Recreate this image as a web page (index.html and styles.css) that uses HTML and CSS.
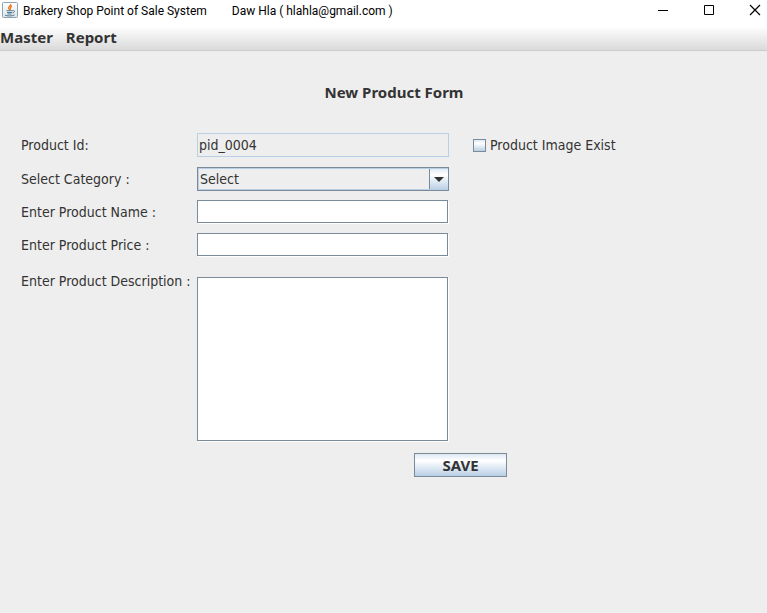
FILE: index.html
```html
<!DOCTYPE html>
<html lang="en">
<head>
<meta charset="utf-8">
<title>Brakery Shop Point of Sale System</title>
<link rel="stylesheet" href="styles.css">
</head>
<body>
<header class="titlebar">
  <svg class="app-icon" width="16" height="16" viewBox="0 0 16 16" aria-hidden="true">
    <defs><linearGradient id="tile" x1="0" y1="0" x2="0" y2="1"><stop offset="0" stop-color="#fff"/><stop offset="1" stop-color="#dbe5ec"/></linearGradient></defs>
    <rect x=".5" y=".5" width="15" height="15" rx="1" fill="url(#tile)" stroke="#8ba3b3"/>
    <path d="M8.700 2C9.300 4 5.500 4.500 6.700 6.500L7.700 8M10 4C7 5.300 9 6.200 8 7.800" fill="none" stroke="#ee7d25" stroke-width="1.400"/>
    <path d="M4.500 8.700H10.500M5 10.500H10M5.500 12H9.500M10.500 8.700C13.500 8 12.700 10.700 10.500 11M3 13.200C5 14.200 10 14.200 12.500 13" fill="none" stroke="#52778f"/>
  </svg>
  <span class="app-name">Brakery Shop Point of Sale System</span>
  <span class="app-user">Daw Hla ( hlahla@gmail.com )</span>
  <div class="window-buttons">
    <button type="button" aria-label="Minimize"><svg width="12" height="12" viewBox="0 0 12 12"><path d="M1 6.500H11" stroke="#000"/></svg></button>
    <button type="button" aria-label="Maximize"><svg width="12" height="12" viewBox="0 0 12 12"><path d="M1.500 1.500H10.500V10.500H1.500Z" fill="none" stroke="#000"/></svg></button>
    <button type="button" aria-label="Close"><svg width="12" height="12" viewBox="0 0 12 12"><path d="M1 1L11 11M11 1L1 11" stroke="#000" stroke-width="1.200"/></svg></button>
  </div>
</header>
<nav class="menubar">
  <button type="button">Master</button>
  <button type="button">Report</button>
</nav>
<main class="page">
  <h1>New Product Form</h1>
  <form class="form">
    <label for="pid">Product Id:</label>
    <input class="field readonly" id="pid" type="text" value="pid_0004" readonly>
    <label class="check"><input type="checkbox">Product Image Exist</label>

    <label for="category">Select Category :</label>
    <div class="combo">
      <select id="category"><option>Select</option></select>
      <svg class="arrow" width="10" height="5" viewBox="0 0 10 5" aria-hidden="true"><path d="M0 0H10L5 5Z" fill="#333"/></svg>
    </div>

    <label for="name">Enter Product Name :</label>
    <input class="field" id="name" type="text">

    <label for="price">Enter Product Price :</label>
    <input class="field" id="price" type="text">

    <label class="top" for="description">Enter Product Description :</label>
    <textarea class="field area" id="description"></textarea>

    <div class="actions"><button class="save" type="submit">SAVE</button></div>
  </form>
</main>
</body>
</html>
```
FILE: styles.css
```css
* { box-sizing: border-box; }

body {
  margin: 0;
  min-height: 100vh;
  background: #eee;
  color: #333;
  font: 14px/20px "DejaVu Sans Condensed", "DejaVu Sans", sans-serif;
}

button, input, select, textarea { font: inherit; color: inherit; }

.titlebar {
  display: flex;
  align-items: center;
  height: 22px;
  padding: 0 6px 2px 2px;
  background: #fff;
  color: #000;
  font: 12px/20px Roboto, sans-serif;
}

.app-name { margin-left: 5px; }
.app-user { margin-left: 25px; }

.app-name, .app-user { padding-top: 2px; }

.window-buttons {
  display: flex;
  gap: 34px;
  margin-left: auto;
}

.window-buttons button {
  display: flex;
  padding: 0;
  border: 0;
  background: none;
}

.menubar {
  display: flex;
  gap: 13px;
  height: 29px;
  padding-top: 4px;
  border-bottom: 1px solid #ccc;
  background: linear-gradient(#fff 15%, #dadada);
}

.menubar button {
  height: 22px;
  padding: 0;
  border: 0;
  background: none;
}

.menubar button, h1, .save {
  font: bold 15px/20px "Noto Sans", sans-serif;
}

.page { padding: 31px 0 16px 21px; }

h1 {
  margin: 0 0 31px;
  text-align: center;
}

.form {
  display: grid;
  grid-template-columns: 176px 252px 1fr;
  row-gap: 9px;
  align-items: center;
}

.form > label { grid-column: 1; white-space: nowrap; }

.form > .check {
  grid-column: 3;
  display: flex;
  align-items: center;
  gap: 4px;
  margin-left: 24px;
}

.check input {
  appearance: none;
  width: 13px;
  height: 13px;
  margin: 0;
  border: 1px solid #7a8a99;
  background: linear-gradient(#dde8f3, #fff 30%, #b8cfe5);
}

.field {
  width: 251px;
  height: 23px;
  margin: 0 0 1px;
  padding: 0 2px;
  border: 1px solid #7a8a99;
  border-radius: 0;
  background: #fff;
  box-shadow: 1px 1px 0 #fff;
  outline: 0;
}

.readonly {
  width: 100%;
  height: 24px;
  margin-bottom: 0;
  padding: 0 1px;
  border-color: #b8cfe5;
  background: #eee;
  box-shadow: none;
}

.combo { position: relative; height: 24px; margin-top: 1px; }

.combo select {
  appearance: none;
  display: block;
  width: 100%;
  height: 24px;
  padding: 0 24px 0 2px;
  border: 1px solid #7a8a99;
  border-radius: 0;
  background:
    linear-gradient(#7a8a99, #7a8a99) right 18px top / 1px 100% no-repeat,
    linear-gradient(#dde8f3, #fff 30%, #b8cfe5) right / 18px 100% no-repeat,
    #eee;
  box-shadow: inset 1px 1px 0 #b8cfe5, inset 0 -1px 0 #b8cfe5;
  outline: 0;
}

.arrow {
  position: absolute;
  right: 5px;
  top: 10px;
  pointer-events: none;
}

.form > .top { align-self: start; margin-top: 5px; }

.area {
  display: block;
  height: 164px;
  margin-top: 11px;
  resize: none;
}

.actions {
  grid-column: 1 / -1;
  margin: 2px 0 0 393px;
}

.save {
  display: block;
  width: 93px;
  height: 24px;
  padding: 0;
  border: 1px solid #7a8a99;
  background: linear-gradient(#dde8f3, #fff 30%, #b8cfe5);
}
```
